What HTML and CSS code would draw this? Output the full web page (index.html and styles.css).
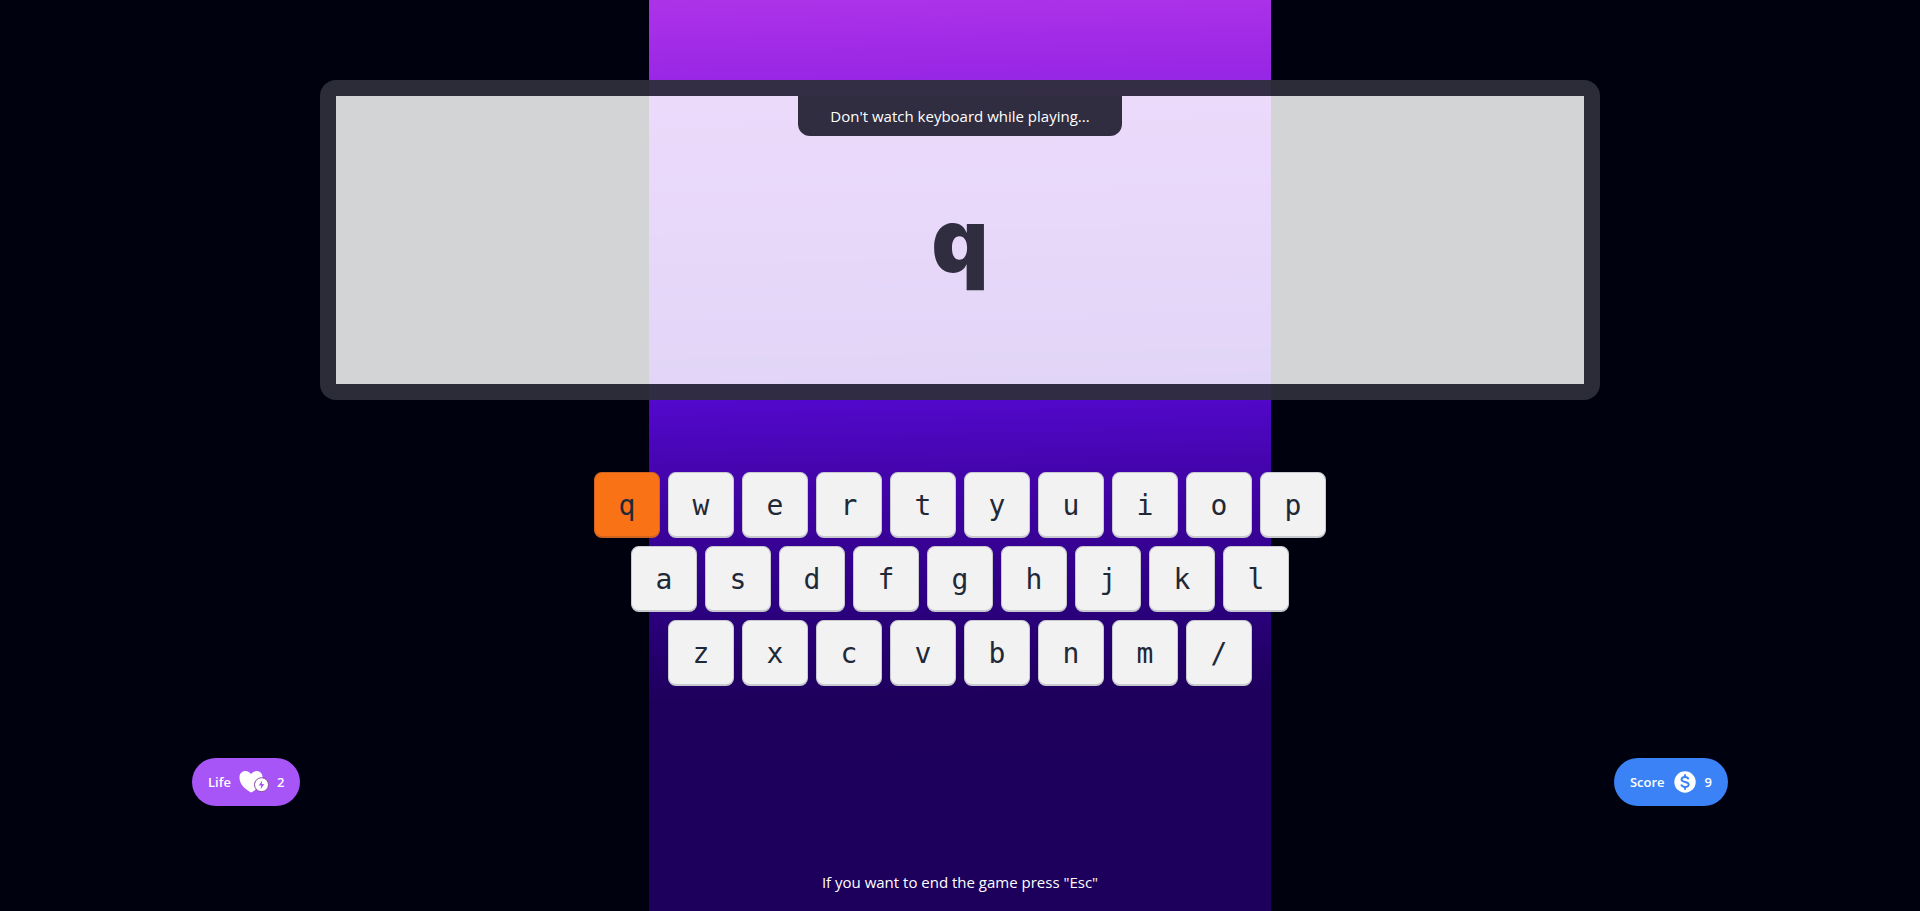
FILE: index.html
```
<!DOCTYPE html>
<html lang="en">
<head>
<meta charset="utf-8">
<meta name="viewport" content="width=device-width, initial-scale=1">
<title>Typing Game</title>
<link rel="stylesheet" href="styles.css">
</head>
<body>
<main class="game">
  <section class="screen">
    <p class="screen-note">Don't watch keyboard while playing...</p>
    <h1 class="screen-letter">q</h1>
  </section>

  <section class="keyboard" aria-label="Keyboard">
    <div class="key-row">
      <kbd class="key key-active">q</kbd>
      <kbd class="key">w</kbd>
      <kbd class="key">e</kbd>
      <kbd class="key">r</kbd>
      <kbd class="key">t</kbd>
      <kbd class="key">y</kbd>
      <kbd class="key">u</kbd>
      <kbd class="key">i</kbd>
      <kbd class="key">o</kbd>
      <kbd class="key">p</kbd>
    </div>
    <div class="key-row">
      <kbd class="key">a</kbd>
      <kbd class="key">s</kbd>
      <kbd class="key">d</kbd>
      <kbd class="key">f</kbd>
      <kbd class="key">g</kbd>
      <kbd class="key">h</kbd>
      <kbd class="key">j</kbd>
      <kbd class="key">k</kbd>
      <kbd class="key">l</kbd>
    </div>
    <div class="key-row">
      <kbd class="key">z</kbd>
      <kbd class="key">x</kbd>
      <kbd class="key">c</kbd>
      <kbd class="key">v</kbd>
      <kbd class="key">b</kbd>
      <kbd class="key">n</kbd>
      <kbd class="key">m</kbd>
      <kbd class="key">/</kbd>
    </div>
  </section>

  <section class="stats">
    <button class="stat stat-life" type="button">
      <span>Life</span>
      <svg class="icon-life" viewBox="0 0 30 24" aria-hidden="true">
        <path fill="#fff" d="M12 22.500 C10.500 21.800 3.500 17.500 1.500 12.500 C0 8.500 0 4.500 2.500 2.500 C5.500 0.200 9.500 0.800 12 4 C14.500 0.800 18.500 0.200 21.500 2.500 C24 4.500 24 8.500 22.500 12.500 C20.500 17.500 13.500 21.800 12 22.500Z"/>
        <circle cx="22.500" cy="14.700" r="7" fill="#fff" stroke="#8a4a9e" stroke-width="1"/>
        <path fill="#a855f7" d="M23.200 10.500 L19.700 15.600 H22.100 L21.700 19.200 L25.200 13.900 H22.800Z"/>
      </svg>
      <span>2</span>
    </button>
    <button class="stat stat-score" type="button">
      <span>Score</span>
      <svg class="icon-score" viewBox="0 0 24 24" aria-hidden="true">
        <circle cx="12" cy="12" r="10.700" fill="#fff"/>
        <path fill="none" stroke="#3b82f6" stroke-width="1.900" d="M12 4.200v3M12 16.800v3M15.600 9.200C15.200 7.800 14 7 12 7C10 7 8.500 7.900 8.500 9.500C8.500 13 15.700 10.900 15.700 14.500C15.700 16.100 14.200 17 12 17C9.900 17 8.600 16.100 8.200 14.600"/>
      </svg>
      <span>9</span>
    </button>
  </section>

  <footer class="hint">If you want to end the game press "Esc"</footer>
</main>
</body>
</html>
```
FILE: styles.css
```
* {
  box-sizing: border-box;
}

body {
  margin: 0;
  background: #00010f;
  color: #fff;
  font-family: "Segoe UI", "Open Sans", "Noto Sans", sans-serif;
  font-size: 15px;
  line-height: 24px;
}

.game {
  display: flex;
  flex-direction: column;
  align-items: center;
  gap: 72px;
  min-height: 100vh;
  padding: 80px 0 16px;
  background: linear-gradient(179deg, #ad33e8 0%, #9826e5 9%, #7618dc 28%, #5208ca 44%, #4404ac 52%, #2c0080 66%, #1e005c 76%, #1c005c 100%) center / 622px 100% no-repeat;
}

/* Display panel */
.screen {
  display: flex;
  flex-direction: column;
  align-items: center;
  width: 66.6667%;
  height: 320px;
  border: 16px solid rgba(46, 46, 60, 0.95);
  border-radius: 16px;
  background: rgba(254, 255, 255, 0.83) padding-box;
}

.screen-note {
  margin: 0;
  padding: 8px 32px;
  border-radius: 0 0 12px 12px;
  background: #302d40;
}

.screen-letter {
  margin: 56px 0 0;
  color: #302d40;
  font-family: Inter, "Open Sans", sans-serif;
  font-size: 88px;
  font-weight: 900;
  line-height: 96px;
}

/* Keyboard */
.keyboard {
  display: flex;
  flex-direction: column;
  gap: 8px;
}

.key-row {
  display: flex;
  justify-content: center;
  gap: 8px;
}

.key {
  display: flex;
  align-items: center;
  justify-content: center;
  width: 66px;
  height: 66px;
  padding-top: 2px;
  border: 1px solid #c8c9ce;
  border-bottom-width: 2px;
  border-radius: 8px;
  background: #f2f2f2;
  color: #1f2937;
  font-family: Consolas, "DejaVu Sans Mono", monospace;
  font-size: 28px;
}

.key-active {
  border-color: #cf6420;
  background: #f97316;
}

/* Life and score */
.stats {
  display: flex;
  justify-content: space-between;
  width: 80%;
}

.stat {
  display: flex;
  align-items: center;
  gap: 8px;
  height: 48px;
  padding: 0 16px;
  border: 0;
  border-radius: 24px;
  color: #fff;
  font: inherit;
  font-size: 13px;
  font-weight: 600;
}

.stat-life {
  background: #a855f7;
}

.stat-score {
  background: #3b82f6;
}

.icon-life {
  width: 30px;
  height: 24px;
}

.icon-score {
  width: 24px;
  height: 24px;
}

.hint {
  margin-top: -8px;
}
```
